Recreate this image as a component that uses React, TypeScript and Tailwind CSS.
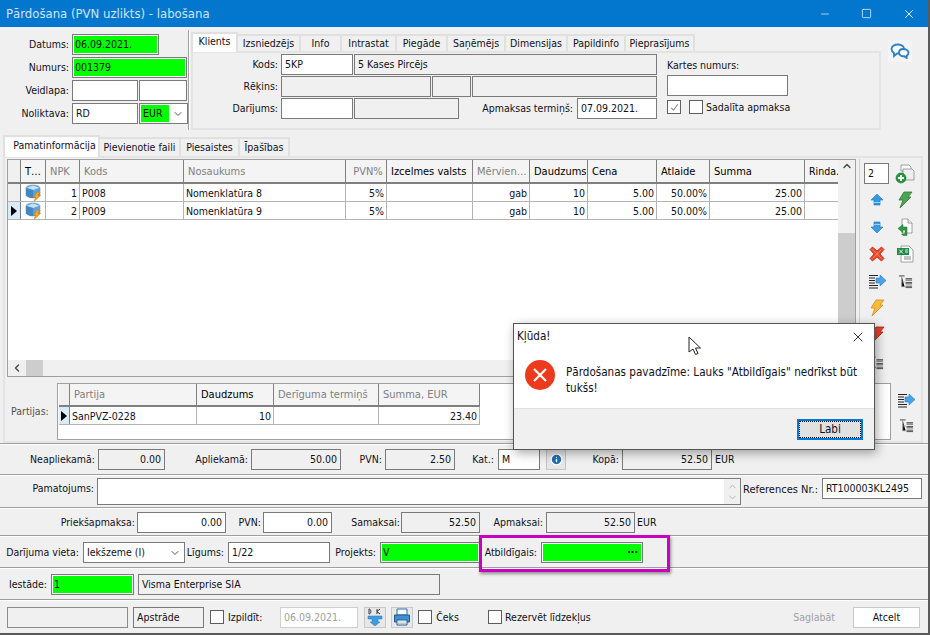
import type { ReactNode } from 'react';
import { clsx } from 'clsx';
import { Info, Minus, Square, X, ChevronDown, ChevronUp, ChevronLeft } from 'lucide-react';

const Box = ({ className, children }: { className?: string; children?: ReactNode }) => (
  <div
    className={clsx(
      'flex h-[21px] shrink-0 items-center overflow-hidden border border-[#7a7a7a] px-[3px] whitespace-nowrap',
      className,
    )}
  >
    {children}
  </div>
);

const Ro = ({ className, children }: { className?: string; children?: ReactNode }) => (
  <Box className={clsx('bg-[#f0f0f0]', className)}>{children}</Box>
);

const In = ({ className, children }: { className?: string; children?: ReactNode }) => (
  <Box className={clsx('bg-white', className)}>{children}</Box>
);

const Green = ({ className, children }: { className?: string; children?: ReactNode }) => (
  <div
    className={clsx(
      'flex h-[21px] shrink-0 border border-[#7a7a7a] bg-white p-px',
      className,
    )}
  >
    <div className="flex flex-1 items-center overflow-hidden bg-[#00ff00] px-px whitespace-nowrap">
      {children}
    </div>
  </div>
);

const Lbl = ({ className, children }: { className?: string; children?: ReactNode }) => (
  <div className={clsx('shrink-0 text-right whitespace-nowrap', className)}>{children}</div>
);

const Check = ({ className, on }: { className?: string; on?: boolean }) => (
  <div className={clsx('flex size-[14px] shrink-0 items-center justify-center border border-[#5f5f5f] bg-white', className)}>
    {on && (
      <svg viewBox="0 0 12 12" className="size-[11px]" fill="none" stroke="#888" strokeWidth="1.2">
        <path d="M2.5 6.5 5 9l4.5-6.5" />
      </svg>
    )}
  </div>
);

const Tab = ({ className, active, children }: { className?: string; active?: boolean; children?: ReactNode }) => (
  <div
    className={clsx(
      'flex shrink-0 items-center justify-center border-t-2 border-r-2 border-[#e0e0e0] whitespace-nowrap',
      active ? 'relative z-10 -mb-px border-l-2 bg-white pb-[4px]' : 'mt-[2px] bg-[#f0f0f0] pb-px',
      className,
    )}
  >
    {children}
  </div>
);

const Sep = () => <div className="h-[2px] shrink-0 border-t border-[#a0a0a0] bg-white" />;

/* ---- little drawn icons ---- */

const Cube = () => (
  <svg viewBox="0 0 18 18" className="size-[18px]">
    <path d="M8 1c3 0 7 1 7 3v7c0 1.500-4 3-7 3s-7-1.500-7-3V4c0-2 4-3 7-3Z" fill="#5aa3dc" stroke="#7a97b0" strokeWidth=".6" />
    <path d="M1.500 3.800 8 6l6.500-2.200L8 1.500Z" fill="#c4e2f7" />
    <path d="M8 6v8c-3 0-7-1.500-7-3V4Z" fill="#3f87c6" />
    <path d="M12 8 8.500 13h2.400L9 17.500 15.500 11.500H13L15 8Z" fill="#f6a623" stroke="#c9770f" strokeWidth=".6" />
  </svg>
);

const ArrowUp = () => (
  <svg viewBox="0 0 14 14" className="size-[14px]">
    <path d="M7 1 13 7H10V12H4V7H1Z" fill="#2f9be6" stroke="#1a73bd" strokeWidth=".6" />
    <path d="M4 9h6v1H4z" fill="#9ad2f7" />
  </svg>
);

const ArrowDown = () => (
  <svg viewBox="0 0 14 14" className="size-[14px]">
    <path d="M4 2H10V7H13L7 13 1 7H4Z" fill="#3d9be3" stroke="#1a73bd" strokeWidth=".6" />
    <path d="M4 4h6v1H4z" fill="#9ad2f7" />
  </svg>
);

const Bolt = ({ fill, stroke }: { fill: string; stroke: string }) => (
  <svg viewBox="0 0 18 18" className="size-[18px]">
    <path d="M8 1h8l-4 5h3L4 17l3-8H3Z" fill={fill} stroke={stroke} strokeWidth=".8" />
  </svg>
);

const RedX = () => (
  <svg viewBox="0 0 16 16" className="size-[16px]">
    <path
      d="M3.500 1 8 5 12.500 1 15 3.500 11 8l4 4.500L12.500 15 8 11l-4.500 4L1 12.500 5 8 1 3.500Z"
      fill="#ee4a2c"
      stroke="#b3201a"
      strokeWidth=".8"
    />
    <path d="M3.500 3.500 12.500 12.500M12.500 3.500 3.500 12.500" stroke="#f98a5c" strokeWidth=".8" />
  </svg>
);

const AddDocs = () => (
  <svg viewBox="0 0 20 20" className="size-[20px]">
    <path d="M6 1h8l2 2v4H6Z" fill="#fff" stroke="#8b8b8b" strokeWidth=".8" />
    <path d="M8 5h9l2 2v9H8Z" fill="#eee" stroke="#8b8b8b" strokeWidth=".8" />
    <circle cx="6" cy="14" r="5" fill="#1f9d3a" stroke="#136b27" strokeWidth=".6" />
    <path d="M6 11v6M3 14h6" stroke="#fff" strokeWidth="2" />
  </svg>
);

const FileBack = () => (
  <svg viewBox="0 0 18 18" className="size-[18px]">
    <path d="M6 1H12l4 4v10H6Z" fill="#fff" stroke="#8b8b8b" strokeWidth=".8" />
    <path d="M12 1v4h4" fill="#eee" stroke="#8b8b8b" strokeWidth=".8" />
    <path d="M11 9 7 9V6.500L2 10.500 7 14.500V12H9V16H5.500L7 17.500H11Z" fill="#2e9c3e" stroke="#1a6d28" strokeWidth=".5" />
  </svg>
);

const Excel = () => (
  <svg viewBox="0 0 18 18" className="size-[18px]">
    <path d="M5 1h8l4 4v12H5Z" fill="#fff" stroke="#8b8b8b" strokeWidth=".8" />
    <path d="M8 12h7M8 14h7" stroke="#666" strokeWidth=".8" />
    <rect x="1" y="3" width="12" height="7" fill="#1f8a46" />
    <path d="M3 4.500 7 8.500M7 4.500 3 8.500M9 5h3M9 7h3" stroke="#fff" strokeWidth=".9" />
  </svg>
);

const ListArrow = () => (
  <svg viewBox="0 0 18 16" className="h-[16px] w-[18px]">
    <path d="M1 2.500h9M1 5h6M1 7.500h6M1 10h6M1 12.500h9M1 15h9" stroke="#222" />
    <path d="M8 5h4V2l6 5.500L12 13v-3H8Z" fill="#4aa3e6" stroke="#2878bd" strokeWidth=".6" />
  </svg>
);

const TreeList = () => (
  <svg viewBox="0 0 16 16" className="size-[15px]">
    <path d="M1 2h6" stroke="#777" strokeWidth="1.500" />
    <path d="M4 3v10.500h3M4 8.500h3" stroke="#888" strokeWidth=".8" />
    <path d="M8 5h7M8 6.500h7M8 9h7M8 10.500h7M8 13h7M8 14.500h7" stroke="#333" strokeWidth=".9" />
  </svg>
);

const Chat = () => (
  <svg viewBox="0 0 20 16" className="h-[16px] w-[20px]" fill="#fff" stroke="#2a7fc9" strokeWidth="1.800">
    <path d="M8 1.500c3.600 0 6 2 6 4.500s-2.400 4.500-6 4.500H7L4 13v-3C2.500 9 1.500 7.600 1.500 6c0-2.500 2.900-4.500 6.500-4.500Z" />
    <path d="M13 6c3 0 5.500 1.500 5.500 3.800 0 1.300-.7 2.300-1.800 3V15l-2.400-1.800c-3 .3-5.300-1.300-5.300-3.400S10 6 13 6Z" />
  </svg>
);

const Printer = () => (
  <svg viewBox="0 0 18 18" className="size-[18px]">
    <path d="M4 1h10v6H4Z" fill="#fff" stroke="#2a6ca8" />
    <path d="M1.500 7h15v7h-15Z" fill="#3f8fd2" stroke="#1e5c94" />
    <path d="M4 12h10v5H4Z" fill="#fff" stroke="#1e5c94" />
    <path d="M5 14h8M5 15.500h8" stroke="#8ab" strokeWidth=".6" />
  </svg>
);

const DkIcon = () => (
  <svg viewBox="0 0 16 18" className="h-[18px] w-[16px]">
    <path d="M1 8h14v3h-4v3h2l-5 4-5-4h2v-3H1Z" fill="#3f9be0" stroke="#2878bd" strokeWidth=".5" />
    <path d="M2 1v5M2 1c2.500 0 2.500 5 0 5M10 1v5M13 1l-3 2.500L13 6" fill="none" stroke="#333" />
  </svg>
);

/* ---- grids ---- */

const Head = ({ className, dim, children }: { className: string; dim?: boolean; children?: ReactNode }) => (
  <div
    className={clsx(
      'flex h-full shrink-0 items-center overflow-hidden border-r border-[#808080] pl-[4px] whitespace-nowrap',
      dim ? 'text-[#808080]' : 'text-black',
      className,
    )}
  >
    {children}
  </div>
);

const Cell = ({ className, left, children }: { className: string; left?: boolean; children?: ReactNode }) => (
  <div
    className={clsx(
      'flex h-full shrink-0 items-center overflow-hidden border-r border-[#b4b4b4] px-[2px] pt-px whitespace-nowrap',
      left ? 'justify-start' : 'justify-end',
      className,
    )}
  >
    {children}
  </div>
);

const Marker = ({ on }: { on?: boolean }) => (
  <div
    className={clsx(
      'flex h-full w-[13px] shrink-0 items-center justify-center border-r border-[#808080]',
      on ? 'bg-[#d9ebf9]' : 'bg-[#f0f0f0]',
    )}
  >
    {on && <div className="h-0 w-0 border-y-[5px] border-l-[6px] border-y-transparent border-l-black" />}
  </div>
);

const rows = [
  { n: 1, code: 'P008', name: 'Nomenklatūra 8' },
  { n: 2, code: 'P009', name: 'Nomenklatūra 9', on: true },
];

const TopTabs = [
  ['Izsniedzējs', 'w-[63px]'],
  ['Info', 'w-[41px]'],
  ['Intrastat', 'w-[55px]'],
  ['Piegāde', 'w-[51px]'],
  ['Saņēmējs', 'w-[58px]'],
  ['Dimensijas', 'w-[62px]'],
  ['Papildinfo', 'w-[58px]'],
  ['Pieprasījums', 'w-[69px]'],
];

const Header = () => (
  <div className="flex h-[108px] shrink-0">
    <div className="flex w-[188px] shrink-0 flex-col gap-[2px] pt-[7px]">
      <div className="flex items-center">
        <Lbl className="w-[69px]">Datums:</Lbl>
        <Green className="ml-[3px] w-[87px]">06.09.2021.</Green>
      </div>
      <div className="flex items-center">
        <Lbl className="w-[69px]">Numurs:</Lbl>
        <Green className="ml-[3px] w-[115px]">001379</Green>
      </div>
      <div className="flex items-center">
        <Lbl className="w-[69px]">Veidlapa:</Lbl>
        <In className="ml-[3px] w-[66px]" />
        <In className="ml-px w-[48px]" />
      </div>
      <div className="flex items-center">
        <Lbl className="w-[69px]">Noliktava:</Lbl>
        <In className="ml-[3px] w-[66px]">RD</In>
        <div className="ml-px flex h-[21px] w-[49px] shrink-0 border border-[#7a7a7a] bg-white p-px">
          <div className="flex w-[28px] items-center bg-[#00ff00] pl-[2px]">EUR</div>
          <div className="flex flex-1 items-center justify-center">
            <ChevronDown className="size-[12px] text-[#555]" />
          </div>
        </div>
      </div>
    </div>
    <div className="mt-[3px] h-[100px] w-[2px] shrink-0 border-l border-[#a0a0a0] bg-white" />
    <div className="ml-px flex w-[690px] shrink-0 flex-col pt-[5px]">
      <div className="flex h-[19px] shrink-0">
        <Tab active className="w-[47px]">
          Klients
        </Tab>
        {TopTabs.map(([t, w]) => (
          <Tab key={t} className={w}>
            {t}
          </Tab>
        ))}
      </div>
      <div className="flex h-[79px] shrink-0 border-2 border-[#e4e4e4] bg-[#f0f0f0]">
        <div className="flex flex-1 flex-col gap-px pt-px">
          <div className="flex items-center">
            <Lbl className="w-[85px]">Kods:</Lbl>
            <In className="ml-[3px] w-[72px]">5KP</In>
            <Ro className="ml-px w-[303px]">5 Kases Pircējs</Ro>
          </div>
          <div className="flex items-center">
            <Lbl className="w-[85px]">Rēķins:</Lbl>
            <Ro className="ml-[3px] w-[150px]" />
            <Ro className="ml-px w-[39px]" />
            <Ro className="ml-px w-[185px]" />
          </div>
          <div className="flex items-center">
            <Lbl className="w-[85px]">Darījums:</Lbl>
            <In className="ml-[3px] w-[72px]" />
            <Ro className="ml-px w-[105px]" />
            <Lbl className="w-[114px]">Apmaksas termiņš:</Lbl>
            <In className="ml-[4px] w-[80px]">07.09.2021.</In>
          </div>
        </div>
        <div className="mr-[88px] flex w-[124px] shrink-0 flex-col pt-[7px]">
          <div className="h-[15px]">Kartes numurs:</div>
          <In className="w-[121px]" />
          <div className="mt-[4px] flex items-center">
            <Check on />
            <Check className="ml-[8px]" />
            <span className="ml-[3px] whitespace-nowrap">Sadalīta apmaksa</span>
          </div>
        </div>
      </div>
    </div>
    <div className="mt-[13px] ml-[7px] flex h-[22px] w-[24px] items-center justify-center bg-[#f4f4f4]">
      <Chat />
    </div>
  </div>
);

const MainGrid = () => (
  <div className="flex h-[218px] w-[849px] shrink-0 flex-col border border-[#a0a0a0] bg-white">
    <div className="flex h-[24px] shrink-0">
      <div className="flex min-w-0 flex-1 border-b-2 border-[#808080] bg-[#f4f4f4] text-[11px]">
        <div className="h-full w-[13px] shrink-0 border-r border-[#808080] bg-[#f0f0f0]" />
        <Head className="w-[25px]">T…</Head>
        <Head dim className="w-[34px]">NPK</Head>
        <Head dim className="w-[104px]">Kods</Head>
        <Head dim className="w-[162px]">Nosaukums</Head>
        <Head dim className="w-[41px] justify-center pl-0">PVN%</Head>
        <Head className="w-[86px]">Izcelmes valsts</Head>
        <Head dim className="w-[57px]">Mērvien…</Head>
        <Head className="w-[58px]">Daudzums</Head>
        <Head className="w-[69px]">Cena</Head>
        <Head className="w-[53px]">Atlaide</Head>
        <Head className="w-[95px]">Summa</Head>
        <Head className="w-[33px] border-r-0 pl-[2px] text-[10.500px]">Rinda.</Head>
      </div>
      <div className="flex w-[17px] shrink-0 items-start justify-center bg-[#f0f0f0]">
        <ChevronUp className="size-[12px] text-[#505050]" strokeWidth={3} />
      </div>
    </div>
    <div className="flex min-h-0 flex-1">
      <div className="flex min-w-0 flex-1 flex-col">
        <div className="min-h-0 flex-1 overflow-hidden">
          {rows.map((r) => (
            <div key={r.n} className="flex h-[18px] border-b border-[#b4b4b4]">
              <Marker on={r.on} />
              <Cell className="w-[25px] justify-center px-0 pt-0">
                <Cube />
              </Cell>
              <Cell className="w-[34px]">{r.n}</Cell>
              <Cell left className="w-[104px]">{r.code}</Cell>
              <Cell left className="w-[162px]">{r.name}</Cell>
              <Cell className="w-[41px]">5%</Cell>
              <Cell className="w-[86px]" />
              <Cell className="w-[57px]">gab</Cell>
              <Cell className="w-[58px]">10</Cell>
              <Cell className="w-[69px]">5.00</Cell>
              <Cell className="w-[53px]">50.00%</Cell>
              <Cell className="w-[95px]">25.00</Cell>
              <Cell className="w-[33px] border-r-0" />
            </div>
          ))}
        </div>
        <div className="flex h-[16px] shrink-0 items-center bg-[#f0f0f0]">
          <div className="flex w-[18px] justify-center">
            <ChevronLeft className="size-[12px] text-[#505050]" strokeWidth={3} />
          </div>
          <div className="h-full w-[17px] bg-[#cdcdcd]" />
        </div>
      </div>
      <div className="flex w-[17px] shrink-0 flex-col bg-[#f0f0f0] pt-[49px] pb-[16px]">
        <div className="flex-1 bg-[#cdcdcd]" />
      </div>
    </div>
  </div>
);

const Toolbar = () => (
  <div className="ml-[3px] flex shrink-0 flex-col border-l border-[#d0d0d0] pt-[4px] pl-[4px]">
    <div className="mb-[2px] flex h-[21px] items-center">
      <In className="w-[25px]">2</In>
      <div className="ml-[4px] flex w-[24px] justify-center">
        <AddDocs />
      </div>
    </div>
    {[
      [<ArrowUp key="a" />, <Bolt key="b" fill="#4aa651" stroke="#2d7a36" />],
      [<ArrowDown key="a" />, <FileBack key="b" />],
      [<RedX key="a" />, <Excel key="b" />],
      [<ListArrow key="a" />, <TreeList key="b" />],
      [<Bolt key="a" fill="#f8bb3a" stroke="#d9881a" />, null],
      [<Bolt key="a" fill="#e8432a" stroke="#a81f15" />, null],
      [<TreeList key="a" />, null],
    ].map((pair, i) => (
      <div key={i} className="mt-[1px] flex h-[26px] items-center">
        <div className="flex w-[25px] justify-center">{pair[0]}</div>
        <div className="ml-[4px] flex w-[24px] justify-center">{pair[1]}</div>
      </div>
    ))}
  </div>
);

const BatchGrid = () => (
  <div className="flex h-[57px] shrink-0">
    <div className="flex w-[52px] shrink-0 items-center pb-px pl-[6px] text-[#505050]">Partijas:</div>
    <div className="w-[834px] shrink-0 border border-[#a0a0a0] bg-white pl-px">
      <div className="flex h-[23px] w-[421px] border-b-2 border-[#808080] bg-[#f4f4f4] text-[11px]">
        <div className="h-full w-[11px] shrink-0 border-r border-[#808080] bg-[#f0f0f0]" />
        <Head dim className="w-[127px]">Partija</Head>
        <Head className="w-[77px]">Daudzums</Head>
        <Head dim className="w-[105px]">Derīguma termiņš</Head>
        <Head dim className="w-[101px]">Summa, EUR</Head>
      </div>
      <div className="flex h-[18px] w-[421px] border-b border-[#b4b4b4]">
        <div className="flex h-full w-[11px] shrink-0 items-center justify-center border-r border-[#808080] bg-[#d9ebf9]">
          <div className="h-0 w-0 border-y-[5px] border-l-[6px] border-y-transparent border-l-black" />
        </div>
        <Cell left className="w-[127px]">SanPVZ-0228</Cell>
        <Cell className="w-[77px]">10</Cell>
        <Cell className="w-[105px]" />
        <Cell className="w-[101px]">23.40</Cell>
      </div>
    </div>
    <div className="flex flex-1 flex-col items-center gap-[10px] pt-[9px]">
      <ListArrow />
      <TreeList />
    </div>
  </div>
);

const Dialog = () => (
  <div className="absolute top-[323px] left-[513px] flex h-[127px] w-[362px] flex-col border border-[#555] bg-white text-[11.600px] shadow-[2px_3px_10px_rgba(0,0,0,0.35)]">
    <div className="flex h-[26px] shrink-0 items-center justify-between pr-[8px] pl-[3px]">
      <span>Kļūda!</span>
      <X className="size-[16px] text-black" strokeWidth={1.200} />
    </div>
    <div className="flex min-h-0 flex-1 pt-[10px] pl-[11px]">
      <svg viewBox="0 0 30 30" className="size-[30px] shrink-0">
        <circle cx="15" cy="15" r="15" fill="#ee3a1c" />
        <path d="M9 9 21 21M21 9 9 21" stroke="#fff" strokeWidth="2.200" />
      </svg>
      <div className="mt-[4px] ml-[11px] w-[300px] leading-[16px]">
        Pārdošanas pavadzīme: Lauks "Atbildīgais" nedrīkst būt tukšs!
      </div>
    </div>
    <div className="flex h-[41px] shrink-0 items-center justify-end border-t border-[#dfdfdf] bg-[#f0f0f0] pr-[11px]">
      <div className="flex h-[21px] w-[66px] items-center justify-center border-2 border-[#0078d7] bg-[#e1e1e1] pt-px outline-1 -outline-offset-3 outline-black outline-dotted">
        Labi
      </div>
    </div>
  </div>
);

export default function App() {
  return (
    <div className="relative flex h-[635px] w-[930px] flex-col overflow-hidden border-r-2 border-b-2 border-[#5a5a5a] bg-[#f0f0f0] font-['DejaVu_Sans','Roboto',sans-serif] text-[10.500px] leading-none text-[#10101a] [font-stretch:condensed]">
      <div className="flex h-[27px] shrink-0 items-center justify-between bg-[#0277cd] pl-[6px]">
        <span className="text-[13px] text-[#cfe4f6]">Pārdošana (PVN uzlikts) - labošana</span>
        <div className="flex items-center gap-[30px] pr-[12px] text-white">
          <Minus className="size-[12px]" strokeWidth={1.300} />
          <Square className="size-[11px]" strokeWidth={1.500} />
          <X className="size-[14px]" strokeWidth={1.500} />
        </div>
      </div>

      <Header />

      {/* main tabs */}
      <div className="flex h-[21px] shrink-0 pl-[3px]">
        <Tab active className="w-[97px] pl-[6px]">Pamatinformācija</Tab>
        <Tab className="w-[81px]">Pievienotie faili</Tab>
        <Tab className="w-[59px]">Piesaistes</Tab>
        <Tab className="w-[50px]">Īpašības</Tab>
      </div>
      <div className="mr-[5px] ml-[3px] flex h-[287px] shrink-0 flex-col border-2 border-[#e4e4e4]">
        <div className="flex h-[221px] shrink-0 pt-px pl-[2px]">
          <MainGrid />
          <Toolbar />
        </div>
        <div className="ml-[1px] h-[4px] shrink-0" />
        <BatchGrid />
      </div>

      <Sep />
      <div className="flex h-[29px] shrink-0 items-center">
        <Lbl className="w-[95px]">Neapliekamā:</Lbl>
        <Ro className="ml-[3px] w-[67px] justify-end">0.00</Ro>
        <Lbl className="w-[83px]">Apliekamā:</Lbl>
        <Ro className="ml-[3px] w-[90px] justify-end">50.00</Ro>
        <Lbl className="w-[41px]">PVN:</Lbl>
        <Ro className="ml-[3px] w-[70px] justify-end">2.50</Ro>
        <Lbl className="w-[39px]">Kat.:</Lbl>
        <In className="ml-[4px] w-[42px]">M</In>
        <div className="ml-[6px] flex h-[21px] w-[20px] shrink-0 items-center justify-center border border-[#c4c4c4] bg-[#e6e6e6]">
          <Info className="size-[13px] fill-[#1f6fb5] text-white" strokeWidth={2.500} />
        </div>
        <Lbl className="w-[53px]">Kopā:</Lbl>
        <Ro className="ml-[3px] w-[90px] justify-end">52.50</Ro>
        <span className="ml-[3px]">EUR</span>
      </div>
      <Sep />
      <div className="flex h-[31px] shrink-0 items-start pt-[2px]">
        <Lbl className="w-[94px] pt-[5px]">Pamatojums:</Lbl>
        <div className="ml-[3px] flex h-[27px] w-[644px] shrink-0 justify-end border border-[#7a7a7a] bg-white">
          <div className="flex w-[16px] flex-col items-center justify-center bg-[#f0f0f0] text-[#b0b0b0]">
            <ChevronUp className="size-[11px]" />
            <ChevronDown className="size-[11px]" />
          </div>
        </div>
        <Lbl className="ml-px w-[76px] pt-[6px] text-[11px]">References Nr.:</Lbl>
        <In className="ml-[4px] w-[100px]">RT100003KL2495</In>
      </div>
      <Sep />
      <div className="flex h-[26px] shrink-0 items-center">
        <Lbl className="w-[135px]">Priekšapmaksa:</Lbl>
        <In className="ml-[2px] w-[89px] justify-end">0.00</In>
        <Lbl className="w-[35px]">PVN:</Lbl>
        <In className="ml-[2px] w-[69px] justify-end">0.00</In>
        <Lbl className="w-[68px]">Samaksai:</Lbl>
        <Ro className="ml-px w-[79px] justify-end">52.50</Ro>
        <Lbl className="w-[63px]">Apmaksai:</Lbl>
        <Ro className="ml-[3px] w-[89px] justify-end">52.50</Ro>
        <span className="ml-[2px]">EUR</span>
      </div>
      <Sep />
      <div className="flex h-[30px] shrink-0 items-center pt-px">
        <Lbl className="w-[79px]">Darījuma vieta:</Lbl>
        <In className="ml-[4px] w-[102px] justify-between">
          Iekšzeme (I)
          <ChevronDown className="size-[12px] text-[#555]" />
        </In>
        <Lbl className="w-[39px]">Līgums:</Lbl>
        <In className="ml-[4px] w-[102px]">1/22</In>
        <Lbl className="w-[46px]">Projekts:</Lbl>
        <Green className="ml-[4px] w-[100px]">V</Green>
        <Lbl className="w-[57px]">Atbildīgais:</Lbl>
        <Green className="ml-[4px] w-[102px]">
          <span className="ml-auto pr-[2px] font-bold">···</span>
        </Green>
      </div>
      <Sep />
      <div className="flex h-[30px] shrink-0 items-center">
        <Lbl className="w-[47px]">Iestāde:</Lbl>
        <Green className="ml-[4px] w-[83px]">1</Green>
        <Ro className="ml-[4px] w-[302px]">Visma Enterprise SIA</Ro>
      </div>
      <Sep />
      <div className="flex min-h-0 flex-1 items-center pr-[8px] pl-[7px]">
        <Ro className="w-[121px] border-[#8a8a8a]" />
        <Ro className="ml-[5px] w-[71px]">Apstrāde</Ro>
        <Check className="ml-[6px]" />
        <Lbl className="ml-[4px] w-[34px] text-left">Izpildīt:</Lbl>
        <Box className="ml-[18px] w-[78px] border-[#cfcfcf] bg-white text-[#a0a0a0]">06.09.2021.</Box>
        <div className="ml-[6px] flex h-[21px] w-[22px] shrink-0 items-center justify-center border border-[#c8c8c8] bg-[#e8e8e8]">
          <DkIcon />
        </div>
        <div className="ml-[5px] flex h-[21px] w-[22px] shrink-0 items-center justify-center border border-[#c8c8c8] bg-[#e8e8e8]">
          <Printer />
        </div>
        <Check className="ml-[5px]" />
        <Lbl className="ml-[4px] w-[23px] text-left">Čeks</Lbl>
        <Check className="ml-[29px]" />
        <span className="ml-[3px]">Rezervēt līdzekļus</span>
        <span className="ml-auto text-[#a0a0a0]">Saglabāt</span>
        <div className="ml-[18px] flex h-[21px] w-[67px] shrink-0 items-center justify-center border border-[#c8c8c8] bg-white">
          Atcelt
        </div>
      </div>

      {/* overlays */}
      <div className="absolute top-[535px] left-[479px] h-[37px] w-[191px] border-[3px] border-[#c800c0] shadow-[1px_2px_3px_rgba(0,0,0,0.4)]" />
      <Dialog />
      <svg viewBox="0 0 14 20" className="absolute top-[336px] left-[688px] h-[20px] w-[14px]">
        <path d="M1 1v15l4-3 2.500 5.500 2.500-1L7.500 12H12.500Z" fill="#fff" stroke="#222" strokeWidth="1" />
      </svg>
    </div>
  );
}
